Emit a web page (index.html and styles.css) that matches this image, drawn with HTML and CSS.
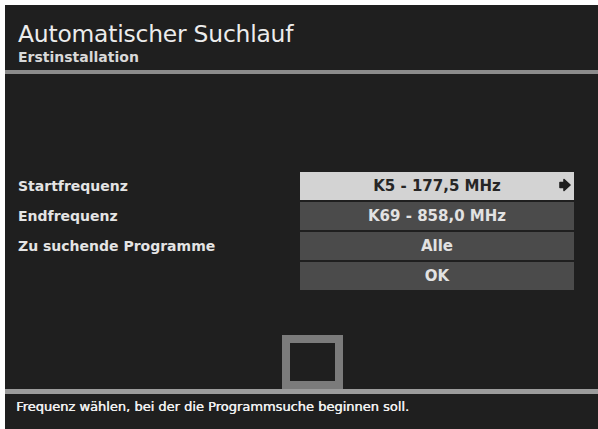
FILE: index.html
```html
<!DOCTYPE html>
<html lang="de">
<head>
  <meta charset="UTF-8" />
  <meta name="viewport" content="width=device-width, initial-scale=1.0" />
  <title>Automatischer Suchlauf</title>
  <link rel="stylesheet" href="styles.css">
</head>
<body>
  <div class="screen">
    <div class="header">
      <h1>Automatischer Suchlauf</h1>
      <p class="subtitle">Erstinstallation</p>
    </div>

    <div class="settings">
      <div class="label">Startfrequenz</div>
      <div class="option selected">
        K5 - 177,5 MHz
        <svg class="arrow" width="12" height="14" viewBox="0 0 12 14">
          <path d="M1 4.5 H5 V1.5 L11 7 L5 12.5 V9.5 H1 Z" fill="#1e1e1e" stroke="#1e1e1e" stroke-width="1.6" stroke-linejoin="round"/>
        </svg>
      </div>
      <div class="label">Endfrequenz</div>
      <div class="option">K69 - 858,0 MHz</div>
      <div class="label">Zu suchende Programme</div>
      <div class="option">Alle</div>
      <div class="label"></div>
      <div class="option">OK</div>
    </div>

    <div class="spacer">
      <div class="marker"></div>
    </div>

    <div class="footer">Frequenz wählen, bei der die Programmsuche beginnen soll.</div>
  </div>
</body>
</html>
```

FILE: styles.css
```css
:root {
  --screen-bg: #1f1f1f;
  --text-color: #e8e8e8;
  --option-bg: #4b4b4b;
  --option-selected: #d3d3d3;
  --line-color: #8c8c8c;
}
* {
  margin: 0;
  padding: 0;
  box-sizing: border-box;
}
body {
  background: #fff;
  font-family: 'DejaVu Sans', 'Open Sans', sans-serif;
  color: var(--text-color);
}
.screen {
  width: 593px;
  height: 424px;
  margin: 5px 0 0 5px;
  background: var(--screen-bg);
  display: flex;
  flex-direction: column;
}
.header {
  height: 69px;
  padding: 15px 0 0 13px;
  border-bottom: 4px solid var(--line-color);
}
h1 {
  font-size: 23.4px;
  font-weight: 400;
  line-height: 28px;
  letter-spacing: -0.2px;
  color: #ececec;
}
.subtitle {
  font-size: 14px;
  font-weight: 700;
  line-height: 18px;
  color: #d8d8d8;
}
.settings {
  margin-top: 98px;
  display: grid;
  grid-template-columns: 282px 274px;
  grid-auto-rows: 28px;
  row-gap: 2px;
  padding-left: 13px;
}
.label {
  font-size: 14px;
  font-weight: 700;
  display: flex;
  align-items: center;
  color: #e4e4e4;
}
.option {
  background: var(--option-bg);
  font-size: 15px;
  font-weight: 700;
  display: flex;
  align-items: center;
  justify-content: center;
  position: relative;
  color: #e2e2e2;
}
.option.selected {
  background: var(--option-selected);
  color: #262626;
}
.arrow {
  position: absolute;
  right: 3px;
  top: 6px;
}
.spacer {
  flex: 1;
  display: flex;
  align-items: flex-end;
  padding-left: 277px;
}
.marker {
  width: 61px;
  height: 54px;
  border: 8px solid #7b7b7b;
}
.footer {
  border-top: 5px solid #9c9c9c;
  height: 40px;
  padding: 4px 0 0 11px;
  font-size: 13px;
  font-weight: 400;
  line-height: 18px;
  color: #f0f0f0;
  text-shadow: 0.4px 0 0 #f0f0f0;
}
```
